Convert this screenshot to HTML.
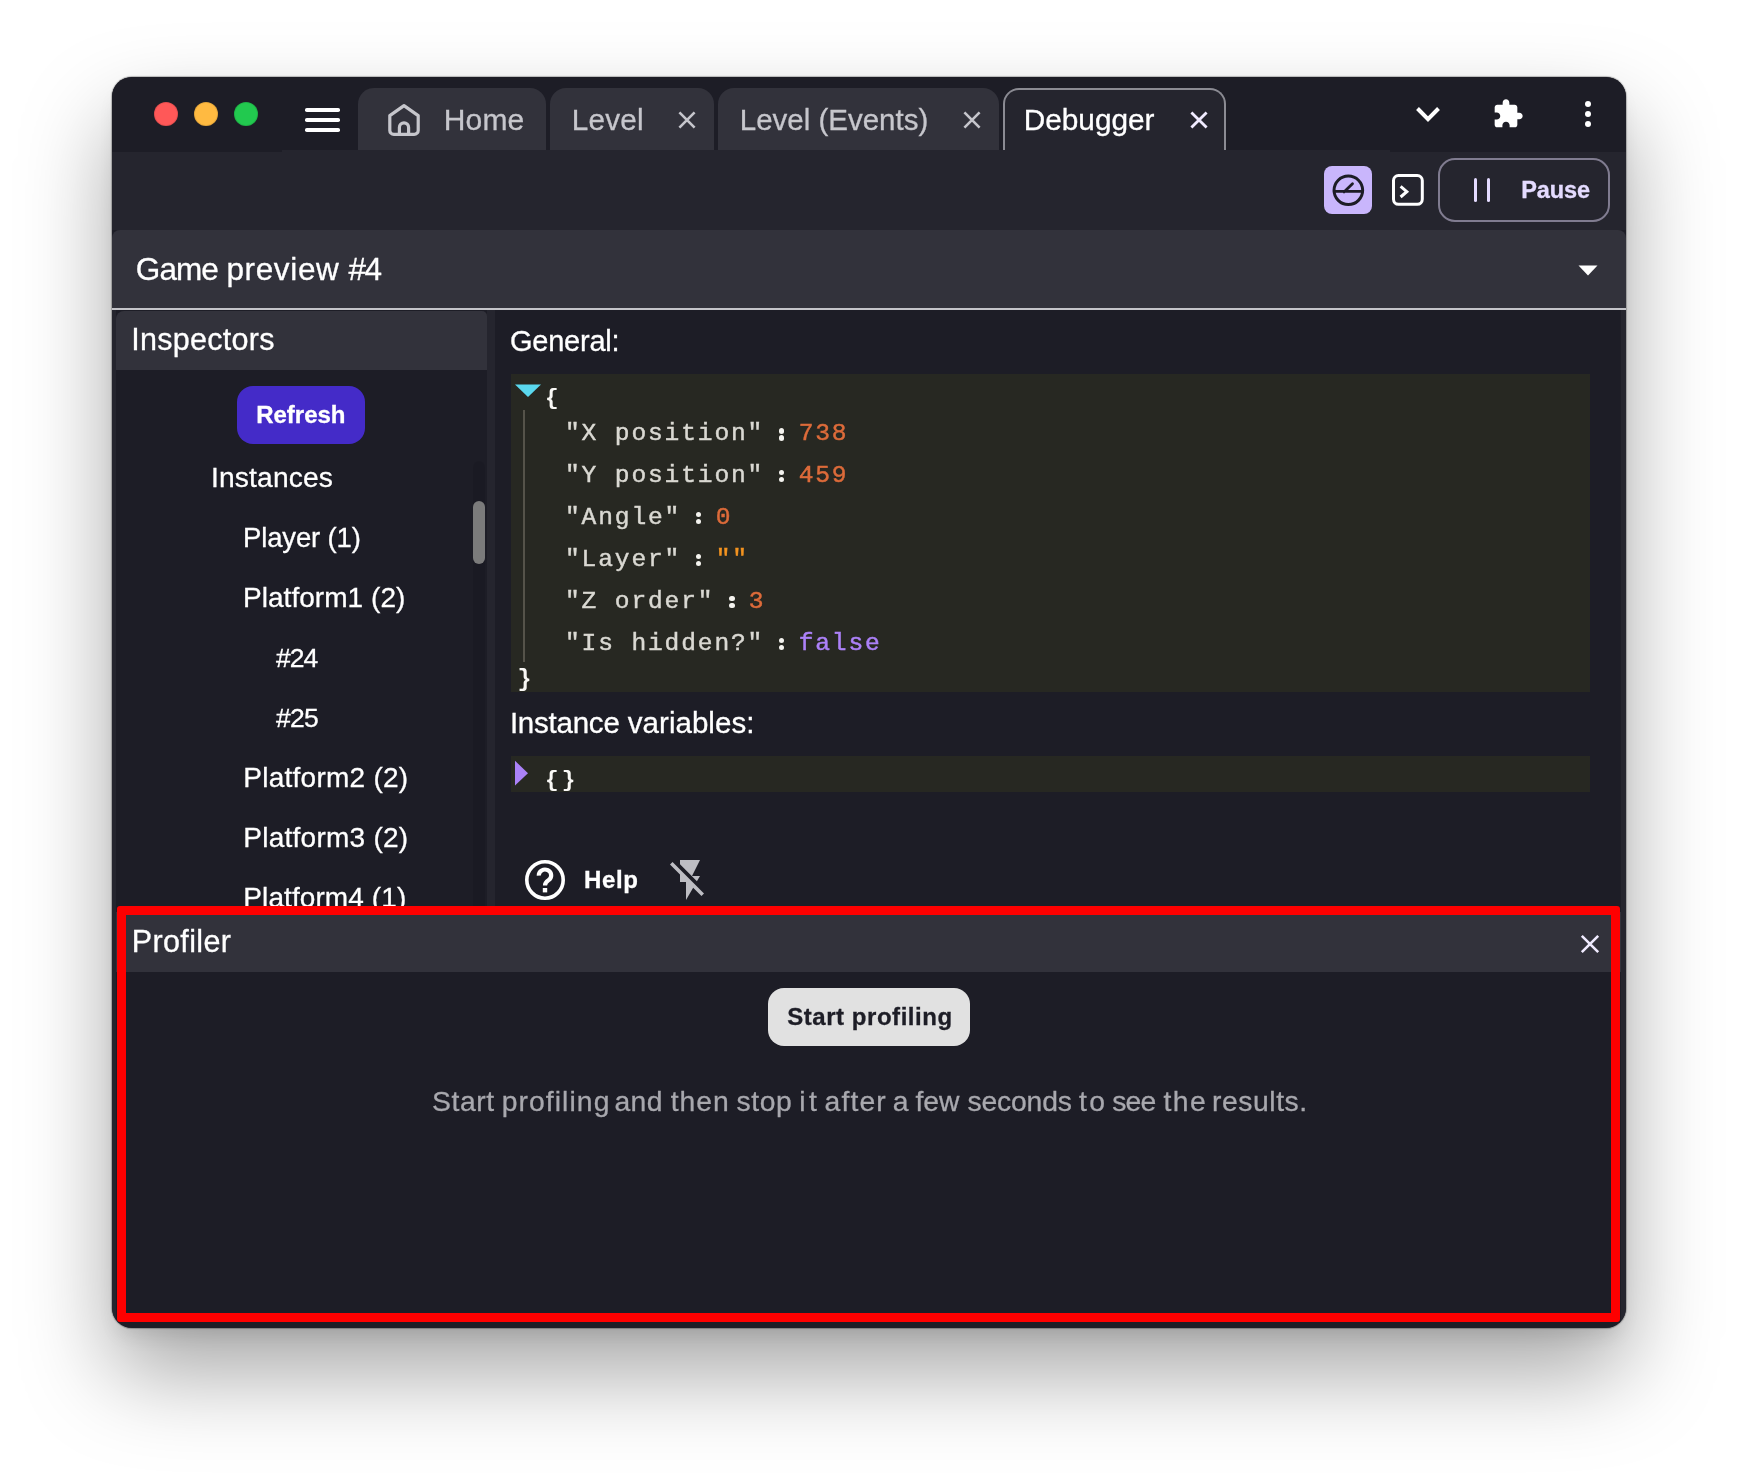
<!DOCTYPE html>
<html><head><meta charset="utf-8"><title>Debugger</title>
<style>
html,body{margin:0;padding:0;}
body{width:1738px;height:1476px;background:#fff;position:relative;overflow:hidden;font-family:"Liberation Sans",sans-serif;}
#shadow{position:absolute;left:112px;top:77px;width:1514px;height:1250.500px;border-radius:20px;background:#1d1d26;
 box-shadow:0 0 1px 1px rgba(0,0,0,.25),0 45px 90px rgba(0,0,0,.35),0 12px 20px -6px rgba(0,0,0,.10);}
#win{will-change:transform;position:absolute;left:0;top:0;width:1738px;height:1476px;clip-path:inset(77px 112px 148.500px 112px round 20px);}
.r{position:absolute;display:block;}
.t{position:absolute;white-space:pre;line-height:1;}
.s{font-family:"Liberation Sans",sans-serif;}
.m{font-family:"Liberation Mono",monospace;}
.mx{font-family:"Liberation Mono",monospace;}
.sx{font-family:"Liberation Sans",sans-serif;}
.k{-webkit-text-stroke:0.45px currentColor;}
.s{-webkit-text-stroke:0.3px currentColor;}
</style></head><body>
<div id="shadow"></div>
<div id="win">
<div class="r" style="left:112px;top:77px;width:1514px;height:75px;background:#1d1d26;"></div>
<div class="r" style="left:112px;top:152px;width:170px;height:78px;background:#25252e;"></div>
<div class="r" style="left:282px;top:150px;width:1108px;height:80px;background:#25252e;"></div>
<div class="r" style="left:1390px;top:152px;width:236px;height:78px;background:#25252e;"></div>
<div class="r" style="left:154px;top:102px;width:24px;height:24px;background:#ff5858;border-radius:50%;box-shadow:inset 0 0 0 1px rgba(0,0,0,.1);"></div>
<div class="r" style="left:194px;top:102px;width:24px;height:24px;background:#ffba41;border-radius:50%;box-shadow:inset 0 0 0 1px rgba(0,0,0,.1);"></div>
<div class="r" style="left:234px;top:102px;width:24px;height:24px;background:#22c94f;border-radius:50%;box-shadow:inset 0 0 0 1px rgba(0,0,0,.1);"></div>
<div class="r" style="left:304.5px;top:108.2px;width:35.3px;height:3.6px;background:#fff;border-radius:1.8px;"></div>
<div class="r" style="left:304.5px;top:118.2px;width:35.3px;height:3.6px;background:#fff;border-radius:1.8px;"></div>
<div class="r" style="left:304.5px;top:128.2px;width:35.3px;height:3.6px;background:#fff;border-radius:1.8px;"></div>
<div class="r" style="left:358px;top:88px;width:188px;height:62px;background:#32323b;border-radius:16px 16px 0 0;"></div>
<div class="r" style="left:550px;top:88px;width:164px;height:62px;background:#32323b;border-radius:16px 16px 0 0;"></div>
<div class="r" style="left:718px;top:88px;width:281px;height:62px;background:#32323b;border-radius:16px 16px 0 0;"></div>
<div class="r" style="left:1003px;top:88px;width:223px;height:62px;box-sizing:border-box;background:#25252e;border:2px solid #8b8b93;border-bottom:none;border-radius:16px 16px 0 0;"></div>
<svg class="r" style="left:386px;top:102px" width="36" height="36" viewBox="0 0 36 36" fill="none" stroke="#c6c6cc" stroke-width="3.2" stroke-linejoin="round"><path d="M18 3.6 L32.2 13.6 V28.4 a4 4 0 0 1 -4 4 H7.8 a4 4 0 0 1 -4 -4 V13.6 Z"/><path d="M13.4 32.4 V25.4 a4.6 4.6 0 0 1 9.2 0 V32.4"/></svg>
<div class="t s" style="left:443.76px;top:105px;font-size:30px;color:#c6c6cc;letter-spacing:0.175px;">Home</div>
<div class="t s" style="left:571.79px;top:105px;font-size:29.7px;color:#c6c6cc;letter-spacing:0.215px;">Level</div>
<div class="t s" style="left:739.80px;top:105px;font-size:29.5px;color:#c6c6cc;letter-spacing:-0.011px;">Level (Events)</div>
<div class="t s" style="left:1023.78px;top:105px;font-size:29.8px;color:#fff;letter-spacing:-0.027px;">Debugger</div>
<svg class="r" style="left:675px;top:108.1px" width="24" height="24" viewBox="-12 -12 24 24" stroke="#c6c6cc" stroke-width="2.6" fill="none"><path d="M-7.6 -7.6 L7.6 7.6 M7.6 -7.6 L-7.6 7.6"/></svg>
<svg class="r" style="left:960.2px;top:108.1px" width="24" height="24" viewBox="-12 -12 24 24" stroke="#c6c6cc" stroke-width="2.6" fill="none"><path d="M-7.6 -7.6 L7.6 7.6 M7.6 -7.6 L-7.6 7.6"/></svg>
<svg class="r" style="left:1187px;top:108.2px" width="24" height="24" viewBox="-12 -12 24 24" stroke="#f0ebff" stroke-width="2.8" fill="none"><path d="M-7.6 -7.6 L7.6 7.6 M7.6 -7.6 L-7.6 7.6"/></svg>
<svg class="r" style="left:1412px;top:98px" width="32" height="32" viewBox="0 0 32 32" fill="none" stroke="#fff" stroke-width="4"><path d="M5.5 10.5 L16 21.2 L26.5 10.5"/></svg>
<svg class="r" style="left:1492px;top:98px" width="32" height="32" viewBox="0 0 24 24" fill="#fff"><path d="M20.5 11H19V7c0-1.1-.9-2-2-2h-4V3.500C13 2.120 11.880 1 10.500 1S8 2.120 8 3.500V5H4c-1.100 0-1.990.9-1.990 2v3.800H3.500c1.490 0 2.700 1.210 2.700 2.700s-1.210 2.700-2.700 2.700H2V20c0 1.100.9 2 2 2h3.800v-1.500c0-1.490 1.210-2.700 2.700-2.700 1.490 0 2.700 1.210 2.700 2.700V22H17c1.100 0 2-.9 2-2v-4h1.500c1.380 0 2.500-1.120 2.500-2.500S21.880 11 20.500 11z"/></svg>
<div class="r" style="left:1584.9px;top:100.9px;width:6.2px;height:6.2px;background:#fff;border-radius:50%;"></div>
<div class="r" style="left:1584.9px;top:111.0px;width:6.2px;height:6.2px;background:#fff;border-radius:50%;"></div>
<div class="r" style="left:1584.9px;top:121.2px;width:6.2px;height:6.2px;background:#fff;border-radius:50%;"></div>
<div class="r" style="left:1324px;top:166px;width:48px;height:48px;background:#c9b6fc;border-radius:8px;"></div>
<svg class="r" style="left:1324px;top:166px" width="48" height="48" viewBox="0 0 48 48" fill="none" stroke="#1d1d26" stroke-width="3" stroke-linecap="round"><circle cx="24.35" cy="24.3" r="14.300"/><path stroke-width="2.800" d="M10.2 25.300 H38.500 M20 25.900 L28.500 17.700"/></svg>
<svg class="r" style="left:1390px;top:172px" width="36" height="36" viewBox="0 0 36 36" fill="none" stroke="#fff" stroke-width="3" stroke-linecap="round" stroke-linejoin="round"><rect x="3.5" y="3.6" width="28.8" height="28.7" rx="5"/><path d="M10.6 14.4 L16.8 19.7 L10.6 25" stroke-linecap="butt" stroke-linejoin="miter"/></svg>
<div class="r" style="left:1438px;top:158px;width:172px;height:64px;box-sizing:border-box;border:2px solid #807c90;border-radius:17px;"></div>
<div class="r" style="left:1474px;top:178px;width:3px;height:24px;background:#e4dbff;border-radius:1.5px;"></div>
<div class="r" style="left:1486.8px;top:178px;width:3px;height:24px;background:#e4dbff;border-radius:1.5px;"></div>
<div class="t s" style="left:1521.14px;top:179px;font-size:23.5px;font-weight:700;color:#e4dbff;letter-spacing:-0.072px;">Pause</div>
<div class="r" style="left:112px;top:230px;width:1514px;height:78px;background:#32323b;border-radius:8px 8px 0 0;"></div>
<div class="r" style="left:112px;top:308px;width:1514px;height:2px;background:#c4c4c9;"></div>
<div class="t s" style="left:135.83px;top:254px;font-size:31.5px;color:#fff;letter-spacing:-0.915px;">Game</div>
<div class="t s" style="left:226.39px;top:254px;font-size:31.5px;color:#fff;letter-spacing:0.645px;">preview</div>
<div class="t s" style="left:348.48px;top:254px;font-size:31.5px;color:#fff;letter-spacing:-1.420px;">#4</div>
<svg class="r" style="left:1576px;top:262px" width="24" height="16" viewBox="0 0 24 16"><path d="M2.5 3.5 H21.5 L12 13.5 Z" fill="#fff"/></svg>
<div class="r" style="left:112px;top:310px;width:1514px;height:1018px;background:#1d1d26;"></div>
<div class="r" style="left:112px;top:310px;width:4px;height:1018px;background:#25252e;"></div>
<div class="r" style="left:1621px;top:310px;width:5px;height:1018px;background:#25252e;"></div>
<div class="r" style="left:487px;top:310px;width:8px;height:596px;background:#25252e;"></div>
<div class="r" style="left:116px;top:311px;width:371px;height:59px;background:#32323b;border-radius:8px 5px 0 0;"></div>
<div class="t s" style="left:131.32px;top:324px;font-size:30.5px;color:#fff;letter-spacing:0.270px;">Inspectors</div>
<div class="r" style="left:237px;top:386px;width:128px;height:58px;background:#442bc8;border-radius:16px;"></div>
<div class="t s" style="left:256.21px;top:403px;font-size:24px;font-weight:700;color:#fff;letter-spacing:-0.018px;">Refresh</div>
<div class="t s" style="left:210.93px;top:463px;font-size:28.2px;color:#fff;letter-spacing:0.171px;">Instances</div>
<div class="t s" style="left:242.97px;top:524px;font-size:27.5px;color:#fff;letter-spacing:-0.140px;">Player (1)</div>
<div class="t s" style="left:242.92px;top:584px;font-size:28px;color:#fff;letter-spacing:0.057px;">Platform1 (2)</div>
<div class="t s" style="left:276.00px;top:645px;font-size:26.5px;color:#fff;letter-spacing:-0.930px;">#24</div>
<div class="t s" style="left:276.00px;top:705px;font-size:26.5px;color:#fff;letter-spacing:-0.765px;">#25</div>
<div class="t s" style="left:243.32px;top:764px;font-size:28px;color:#fff;letter-spacing:0.249px;">Platform2 (2)</div>
<div class="t s" style="left:243.32px;top:824px;font-size:28px;color:#fff;letter-spacing:0.249px;">Platform3 (2)</div>
<div class="t s" style="left:243.32px;top:884px;font-size:28px;color:#fff;letter-spacing:0.090px;">Platform4 (1)</div>
<div class="r" style="left:473px;top:461px;width:12px;height:445px;background:rgba(0,0,0,.07);border-radius:6px 6px 0 0;"></div>
<div class="r" style="left:473.3px;top:501px;width:11.5px;height:63px;background:#7b7b7b;border-radius:6px;"></div>
<div class="t s" style="left:510.05px;top:327px;font-size:29px;color:#fff;letter-spacing:-0.251px;">General:</div>
<div class="r" style="left:511px;top:374px;width:1079px;height:318px;background:#272822;"></div>
<svg class="r" style="left:513px;top:382px" width="30" height="17" viewBox="0 0 30 17"><path d="M2 2.4 H28 L15 15 Z" fill="#5ad8ee"/></svg>
<div class="r" style="left:523px;top:410px;width:2px;height:252px;background:#55534a;"></div>
<div class="t mx" style="left:545.07px;top:387px;font-size:22.73px;font-weight:700;color:#f9f8f5;">{</div>
<div class="t m k" style="left:565.02px;top:422px;font-size:24.6px;letter-spacing:1.84px;color:#dad9d3;">"X position"</div>
<div class="r" style="left:778.8px;top:428.0px;width:5.6px;height:5.6px;background:#f4f3ef;border-radius:50%;"></div>
<div class="r" style="left:778.8px;top:435.0px;width:5.6px;height:5.6px;background:#f4f3ef;border-radius:50%;"></div>
<div class="t m k" style="left:798.67px;top:422px;font-size:24.6px;letter-spacing:1.84px;color:#dd6b3a;">738</div>
<div class="t m k" style="left:565.02px;top:464px;font-size:24.6px;letter-spacing:1.84px;color:#dad9d3;">"Y position"</div>
<div class="r" style="left:778.8px;top:469.7px;width:5.6px;height:5.6px;background:#f4f3ef;border-radius:50%;"></div>
<div class="r" style="left:778.8px;top:476.7px;width:5.6px;height:5.6px;background:#f4f3ef;border-radius:50%;"></div>
<div class="t m k" style="left:798.67px;top:464px;font-size:24.6px;letter-spacing:1.84px;color:#dd6b3a;">459</div>
<div class="t m k" style="left:565.02px;top:506px;font-size:24.6px;letter-spacing:1.84px;color:#dad9d3;">"Angle"</div>
<div class="r" style="left:695.8px;top:511.7px;width:5.6px;height:5.6px;background:#f4f3ef;border-radius:50%;"></div>
<div class="r" style="left:695.8px;top:518.7px;width:5.6px;height:5.6px;background:#f4f3ef;border-radius:50%;"></div>
<div class="t m k" style="left:715.67px;top:506px;font-size:24.6px;letter-spacing:1.84px;color:#dd6b3a;">0</div>
<div class="t m k" style="left:565.02px;top:548px;font-size:24.6px;letter-spacing:1.84px;color:#dad9d3;">"Layer"</div>
<div class="r" style="left:695.8px;top:553.7px;width:5.6px;height:5.6px;background:#f4f3ef;border-radius:50%;"></div>
<div class="r" style="left:695.8px;top:560.7px;width:5.6px;height:5.6px;background:#f4f3ef;border-radius:50%;"></div>
<div class="t m k" style="left:715.67px;top:548px;font-size:24.6px;letter-spacing:1.84px;color:#f39320;">""</div>
<div class="t m k" style="left:565.02px;top:590px;font-size:24.6px;letter-spacing:1.84px;color:#dad9d3;">"Z order"</div>
<div class="r" style="left:729.0px;top:595.7px;width:5.6px;height:5.6px;background:#f4f3ef;border-radius:50%;"></div>
<div class="r" style="left:729.0px;top:602.7px;width:5.6px;height:5.6px;background:#f4f3ef;border-radius:50%;"></div>
<div class="t m k" style="left:748.87px;top:590px;font-size:24.6px;letter-spacing:1.84px;color:#dd6b3a;">3</div>
<div class="t m k" style="left:565.02px;top:632px;font-size:24.6px;letter-spacing:1.84px;color:#dad9d3;">"Is hidden?"</div>
<div class="r" style="left:778.8px;top:637.7px;width:5.6px;height:5.6px;background:#f4f3ef;border-radius:50%;"></div>
<div class="r" style="left:778.8px;top:644.7px;width:5.6px;height:5.6px;background:#f4f3ef;border-radius:50%;"></div>
<div class="t m k" style="left:798.67px;top:632px;font-size:24.6px;letter-spacing:1.84px;color:#ac81f8;">false</div>
<div class="t mx" style="left:517.53px;top:669px;font-size:23.27px;font-weight:700;color:#f9f8f5;">}</div>
<div class="t s" style="left:509.91px;top:708px;font-size:29.5px;color:#fff;letter-spacing:-0.233px;">Instance</div>
<div class="t s" style="left:627.83px;top:708px;font-size:29.5px;color:#fff;letter-spacing:0.030px;">variables:</div>
<div class="r" style="left:511px;top:756px;width:1079px;height:36px;background:#272822;"></div>
<svg class="r" style="left:513px;top:758px" width="18" height="30" viewBox="0 0 18 30"><path d="M2 2.7 L15 15.2 L2 27.6 Z" fill="#ab82f7"/></svg>
<div class="t mx" style="left:545.07px;top:769px;font-size:22.73px;font-weight:700;color:#f9f8f5;letter-spacing:2.981px;">{}</div>
<svg class="r" style="left:521px;top:856px" width="48" height="48" viewBox="0 0 48 48" fill="none" stroke="#fff" stroke-width="3.6" stroke-linecap="round"><circle cx="24" cy="24" r="18.2"/><path stroke-width="4.200" stroke-linecap="butt" d="M17.8 19.6 a6.2 5.8 0 1 1 9.6 4.600 c-2.300 1.500 -3.400 2.500 -3.400 5.200"/><rect x="21.8" y="32" width="4.400" height="4.400" fill="#fff" stroke="none"/></svg>
<div class="t s" style="left:584.01px;top:868px;font-size:24px;font-weight:700;color:#fff;letter-spacing:0.620px;">Help</div>
<svg class="r" style="left:666px;top:856px" width="48" height="48" viewBox="0 0 24 24" fill="#bdbdc3"><path d="M3.270 3L2 4.270l5 5V13h3v9l3.580-6.140L17.730 20 19 18.730 3.270 3zM17 10h-4l4-8H7v2.180l8.460 8.460L17 10z"/></svg>
<div class="r" style="left:116px;top:912px;width:1505px;height:60px;background:#32323b;"></div>
<div class="t s" style="left:131.72px;top:926px;font-size:30.5px;color:#fff;letter-spacing:0.375px;">Profiler</div>
<svg class="r" style="left:1578px;top:932px" width="24" height="24" viewBox="-12 -12 24 24" stroke="#f0ebff" stroke-width="2.6" fill="none"><path d="M-8.2 -8.2 L8.2 8.2 M8.2 -8.2 L-8.2 8.2"/></svg>
<div class="r" style="left:768px;top:988px;width:202px;height:58px;background:#e1e1e1;border-radius:16px;"></div>
<div class="t s" style="left:787.31px;top:1005px;font-size:24px;font-weight:700;color:#1d1d26;letter-spacing:0.533px;">Start profiling</div>
<div class="t s" style="left:432.03px;top:1087px;font-size:28.3px;color:#a8a8ae;letter-spacing:0.600px;">Start</div>
<div class="t s" style="left:501.70px;top:1087px;font-size:28.3px;color:#a8a8ae;letter-spacing:1.073px;">profiling</div>
<div class="t s" style="left:614.53px;top:1087px;font-size:28.3px;color:#a8a8ae;letter-spacing:0.323px;">and</div>
<div class="t s" style="left:670.78px;top:1087px;font-size:28.3px;color:#a8a8ae;letter-spacing:0.995px;">then</div>
<div class="t s" style="left:736.42px;top:1087px;font-size:28.3px;color:#a8a8ae;letter-spacing:0.653px;">stop</div>
<div class="t s" style="left:799.33px;top:1087px;font-size:28.3px;color:#a8a8ae;letter-spacing:3.402px;">it</div>
<div class="t s" style="left:824.53px;top:1087px;font-size:28.3px;color:#a8a8ae;letter-spacing:1.148px;">after</div>
<div class="t s" style="left:892.73px;top:1087px;font-size:28.3px;color:#a8a8ae;">a</div>
<div class="t s" style="left:915.51px;top:1087px;font-size:28.3px;color:#a8a8ae;letter-spacing:-0.012px;">few</div>
<div class="t s" style="left:967.42px;top:1087px;font-size:28.3px;color:#a8a8ae;letter-spacing:-0.158px;">seconds</div>
<div class="t s" style="left:1079.08px;top:1087px;font-size:28.3px;color:#a8a8ae;letter-spacing:2.197px;">to</div>
<div class="t s" style="left:1112.22px;top:1087px;font-size:28.3px;color:#a8a8ae;letter-spacing:-0.759px;">see</div>
<div class="t s" style="left:1163.58px;top:1087px;font-size:28.3px;color:#a8a8ae;letter-spacing:1.363px;">the</div>
<div class="t s" style="left:1212.03px;top:1087px;font-size:28.3px;color:#a8a8ae;letter-spacing:0.561px;">results.</div>
<div class="r" style="left:117px;top:906px;width:1503px;height:416px;box-sizing:border-box;border:9.4px solid #fe0000;border-radius:3px 3px 3px 3px;"></div>
</div>
</body></html>
